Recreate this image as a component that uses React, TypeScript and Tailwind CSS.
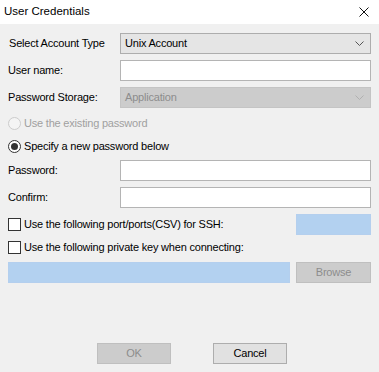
import React from 'react'

const font = { fontFamily: '"Liberation Sans", Arial, sans-serif' }

function Chevron({ color }: { color: string }) {
  return (
    <svg width="9" height="5" viewBox="0 0 9 5" className="shrink-0">
      <path d="M0.5 0.5 L4.5 4.5 L8.5 0.5" fill="none" stroke={color} strokeWidth="1" />
    </svg>
  )
}

function TextBox() {
  return <div className="h-full flex-1 border border-[#b4b4b4] bg-white" />
}

function Row({ label, children, className = '' }: { label: string; children: React.ReactNode; className?: string }) {
  return (
    <div className={`flex h-[21px] items-center ${className}`}>
      <div className="w-[112px] shrink-0 text-black">{label}</div>
      {children}
    </div>
  )
}

function Box() {
  return <div className="h-[13px] w-[13px] shrink-0 border border-[#333333] bg-white" />
}

export default function App() {
  return (
    <div
      className="h-[372px] w-[379px] overflow-hidden bg-[#f0f0f0] text-[11px] leading-none tracking-[-0.2px]"
      style={font}
    >
      {/* Title bar */}
      <div className="flex h-[24px] items-center justify-between bg-white pl-[4px] pr-[10px]">
        <span className="text-[11.5px] tracking-normal text-black">User Credentials</span>
        <svg width="10" height="10" viewBox="0 0 10 10">
          <path d="M0.5 0.5 L9.5 9.5 M9.5 0.5 L0.5 9.5" stroke="#111" strokeWidth="1" />
        </svg>
      </div>

      <div className="flex flex-col px-[8px]">
        <Row label="Select Account Type" className="mt-[9px] pl-[1px]">
          <div className="-ml-[1px] flex h-full flex-1 items-center justify-between border border-[#adadad] bg-[#e5e5e5] pl-[4px] pr-[6px]">
            <span className="text-black">Unix Account</span>
            <Chevron color="#555" />
          </div>
        </Row>

        <Row label="User name:" className="mt-[6px]">
          <TextBox />
        </Row>

        <Row label="Password Storage:" className="mt-[6px]">
          <div className="flex h-full flex-1 items-center justify-between border border-[#c4c4c4] bg-[#cccccc] pl-[4px] pr-[6px]">
            <span className="text-[#8c8c8c]">Application</span>
            <Chevron color="#b0b0b0" />
          </div>
        </Row>

        <div className="mt-[7px] flex h-[16px] items-center gap-[3px]">
          <div className="h-[13px] w-[13px] rounded-full border border-[#cccccc] bg-[#f4f4f4]" />
          <span className="text-[#a0a0a0]">Use the existing password</span>
        </div>

        <div className="mt-[7px] flex h-[16px] items-center gap-[3px]">
          <div className="flex h-[13px] w-[13px] items-center justify-center rounded-full border border-[#333333] bg-white">
            <div className="h-[7px] w-[7px] rounded-full bg-[#333333]" />
          </div>
          <span className="text-black">Specify a new password below</span>
        </div>

        <Row label="Password:" className="mt-[6px]">
          <TextBox />
        </Row>

        <Row label="Confirm:" className="mt-[6px]">
          <TextBox />
        </Row>

        <div className="mt-[6px] flex h-[21px] items-center">
          <div className="flex flex-1 items-center gap-[3px]">
            <Box />
            <span className="text-black">Use the following port/ports(CSV) for SSH:</span>
          </div>
          <div className="h-full w-[75px] border border-[#b4cfee] bg-[#b3d1f0]" />
        </div>

        <div className="mt-[4px] flex h-[16px] items-center gap-[3px]">
          <Box />
          <span className="text-black">Use the following private key when connecting:</span>
        </div>

        <div className="mt-[7px] flex h-[21px] items-center gap-[6px]">
          <div className="h-full flex-1 border border-[#b4cfee] bg-[#b3d1f0]" />
          <div className="flex h-full w-[75px] items-center justify-center border border-[#bfbfbf] bg-[#cccccc] text-[#8c8c8c]">
            Browse
          </div>
        </div>

        <div className="mt-[60px] flex h-[21px] items-center gap-[42px] pl-[89px]">
          <div className="flex h-full w-[74px] items-center justify-center border border-[#bfbfbf] bg-[#cccccc] text-[#8c8c8c]">
            OK
          </div>
          <div className="flex h-full w-[74px] items-center justify-center border border-[#adadad] bg-[#e1e1e1] text-black">
            Cancel
          </div>
        </div>
      </div>
    </div>
  )
}
